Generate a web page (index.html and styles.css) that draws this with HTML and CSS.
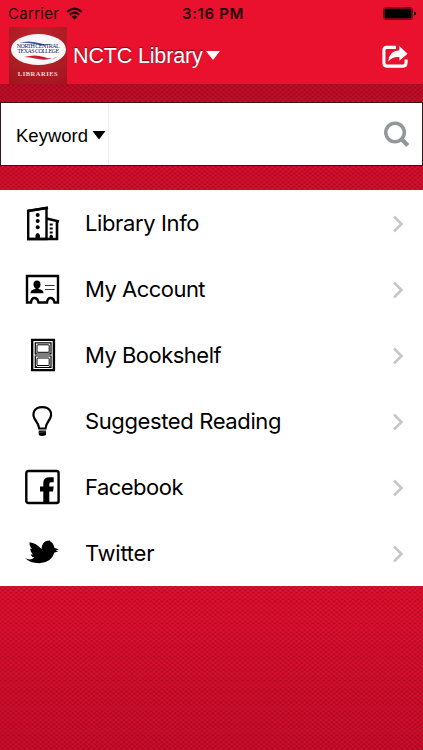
FILE: index.html
```html
<!DOCTYPE html>
<html lang="en">
<head>
<meta charset="utf-8">
<title>NCTC Library</title>
<link rel="stylesheet" href="styles.css">
</head>
<body>
<div class="app">
  <header class="header">
    <div class="status">
      <div class="carrier"><span>Carrier</span>
        <svg width="17" height="13" viewBox="0 0 17 13" fill="none" stroke="currentColor" stroke-width="2.200"><path d="M1.2 4.800Q8.500-1.600 15.800 4.800M3.800 7.800Q8.500 3.600 13.200 7.800"/><path d="M5.600 9.800Q8.500 7.200 11.400 9.800L8.500 12.700Z" fill="currentColor" stroke="none"/></svg>
      </div>
      <span class="time">3:16 PM</span>
      <svg class="battery" width="33" height="13" viewBox="0 0 33 13"><rect x=".5" y=".5" width="29" height="12" rx="2" fill="none" stroke="#66101b"/><rect x="1.500" y="1.500" width="27" height="10" rx="1"/><path d="M31 4.500q2 .5 2 2t-2 2z"/></svg>
    </div>
    <div class="titlebar">
      <div class="logo">
        <div class="seal">
          <svg class="swoosh" width="55" height="32" viewBox="0 0 55 32"><path d="M8 9Q17 6 28 9T46 9Q36 13 26 10.500T8 9Z" fill="#365a9d"/><path d="M13 23Q24 20 33 23T46 23Q36 27 27 25T13 23Z" fill="#c51f31"/></svg>
          <span>NORTH CENTRAL</span><span>TEXAS COLLEGE</span>
        </div>
        <div class="libraries">LIBRARIES</div>
      </div>
      <h1>NCTC Library</h1>
      <svg class="caret" width="14" height="9" viewBox="0 0 14 9"><path d="M0 0H14L7 9Z" fill="#fff"/></svg>
      <svg class="share" width="26" height="24" viewBox="0 0 27 24"><path d="M14.500 2H5Q2 2 2 5V18Q2 21.500 5 21.500H22Q25 21.500 25 18V14.500" fill="none" stroke="#fff" stroke-width="3.200"/><path d="M18 .5L26.500 8.500L18 16V12Q10 11.500 6.500 17Q7 5.500 18 5Z" fill="#fff"/></svg>
    </div>
  </header>
  <div class="search">
    <div class="scope"><span>Keyword</span><svg width="14" height="9" viewBox="0 0 14 9"><path d="M.5 0H13.500L7 8.500Z"/></svg></div>
    <svg class="glass" width="26" height="27" viewBox="0 0 26 27" fill="none" stroke="#92979a"><circle cx="11" cy="11.500" r="9.300" stroke-width="3.500"/><path d="M17 17.500L23.800 24.500" stroke-width="4.300"/></svg>
  </div>
  <nav class="menu">
    <a class="row"><svg class="icon" viewBox="0 0 36 36"><path d="M4.200 34V5.700L22.500 3V34Z" fill="none" stroke="#000" stroke-width="2.400"/><path d="M3 6.200L24 2.800M22.500 13.500L35 16.500M33 17V34H3" fill="none" stroke="#000" stroke-width="2.600"/><circle cx="13.700" cy="10" r="2"/><circle cx="13.700" cy="16" r="2"/><circle cx="13.700" cy="22.200" r="2"/><path d="M11.500 34v-4q2.200-4 4.400 0v4zM25.500 34v-3q1.700-2.500 3.400 0v3z"/><path d="M27.200 18.500V30" stroke="#000" stroke-width="3" stroke-dasharray="2 2"/></svg><span class="l1">Library Info</span><svg class="chevron" viewBox="0 0 12 18"><path d="M2 1.500L9.500 9L2 16.500"/></svg></a>
    <a class="row"><svg class="icon" viewBox="0 0 36 36"><path d="M3 5H34V31.500H30.500Q29.500 27 26.500 27T23 31.500H14.500Q13.500 27 10.500 27T7 31.500H3Z" fill="none" stroke="#000" stroke-width="2.400"/><ellipse cx="13" cy="13.500" rx="3.500" ry="4"/><path d="M11.500 16h3v2q5 .5 5 4.200H6.500Q6.500 18.500 11.500 18z"/><path d="M21 14.500H30.500M21 18.500H30.500" stroke="#333" stroke-width="1.200"/></svg><span class="l2">My Account</span><svg class="chevron" viewBox="0 0 12 18"><path d="M2 1.500L9.500 9L2 16.500"/></svg></a>
    <a class="row"><svg class="icon" viewBox="0 0 36 36" fill="none" stroke="#000"><path d="M8.200 2.900H29.900V33.100H8.200Z" stroke-width="2.400"/><path d="M11.300 5.800H27V17H11.300ZM11.300 19H27V30.500H11.300Z" stroke-width="1.200"/><rect x="13" y="7.800" width="12.200" height="7.500" rx="1"/><rect x="13" y="21" width="12.200" height="7.500" rx="1"/><path d="M11.300 17L13.300 15.500M27 17L24.800 15.500M11.300 30.500L13.300 28.500M27 30.500L24.800 28.500"/></svg><span class="l3">My Bookshelf</span><svg class="chevron" viewBox="0 0 12 18"><path d="M2 1.500L9.500 9L2 16.500"/></svg></a>
    <a class="row"><svg class="icon" viewBox="0 0 36 36"><path d="M15.200 25.500Q15 22 12 18C6.500 10.500 10.500 4.200 18.300 4.200S30 10.500 24.500 18Q21.700 22 21.500 25.500Z" fill="none" stroke="#000" stroke-width="2.200"/><path d="M14.800 27.500H22V32Q18 34 14.800 32Z"/><path d="M14 29.500L22 28.700" stroke="#777" stroke-width=".6"/></svg><span class="l4">Suggested Reading</span><svg class="chevron" viewBox="0 0 12 18"><path d="M2 1.500L9.500 9L2 16.500"/></svg></a>
    <a class="row"><svg class="icon" viewBox="0 0 36 36"><rect x="2.300" y="2" width="32.300" height="32" rx="2" fill="none" stroke="#000" stroke-width="2.400"/><path d="M19.300 34V22.500H16V17.500H19.300V14Q19.300 8.200 25.500 8.200H29.700V13.200H27Q25.300 13.200 25.300 15V17.500H29.700L29 22.500H25.300V34Z"/></svg><span class="l5">Facebook</span><svg class="chevron" viewBox="0 0 12 18"><path d="M2 1.500L9.500 9L2 16.500"/></svg></a>
    <a class="row"><svg class="icon" viewBox="0 0 36 36"><path d="M1 23Q6 26 10.500 22.500Q7.500 22 6.500 19.500H9Q6.500 17 6 13.500L8 14.200Q5 10.500 5.600 7.200Q12 8 17.500 14Q18 6.500 23.500 5.700L26 5.500L26.500 6.800Q29.500 8 30.500 13L34.800 14.300L31.500 15.700L34.500 16.500L30.500 17.500Q27 28 15.500 28.200Q6 28.300 1 23Z"/></svg><span class="l6">Twitter</span><svg class="chevron" viewBox="0 0 12 18"><path d="M2 1.500L9.500 9L2 16.500"/></svg></a>
  </nav>
</div>
</body>
</html>
```

FILE: styles.css
```css
* { box-sizing: border-box; }
body { margin: 0; font-family: Inter, "Liberation Sans", sans-serif; color: #000; }
svg { display: block; flex: none; }
.app {
  height: 750px;
  overflow: hidden;
  background:
    radial-gradient(ellipse 2.2px 1.5px at center, rgba(105,0,22,.5), transparent) 0 0 / 5.4px 4.4px,
    radial-gradient(ellipse 2.2px 1.5px at center, rgba(105,0,22,.5), transparent) 2.7px 2.2px / 5.4px 4.4px,
    linear-gradient(#bc0d27 84px, #c50e29 102px, #d60f2c 166px, #d9102d 190px, #e5112f 586px, #cc0d2b 750px);
}
.header { height: 84px; background: #e9112d; }
.status { height: 27px; padding: 0 7px 0 8px; display: grid; grid-template-columns: 1fr auto 1fr; align-items: center; color: #23050a; font-size: 15px; }
.carrier { display: flex; align-items: center; gap: 7px; letter-spacing: .3px; }
.time { font-weight: 600; letter-spacing: .65px; padding-left: 2px; }
.battery { justify-self: end; }
.titlebar { height: 57px; display: flex; align-items: center; padding: 0 15px 0 9px; }
.logo { width: 58px; height: 57px; flex: none; padding-top: 7px; background: radial-gradient(circle at 50% 30%, #c3272e, #9e151e); }
.seal { width: 55px; height: 31px; margin: 0 auto; border-radius: 50%; background: radial-gradient(#fff 45%, #e1e1e5); display: flex; flex-direction: column; align-items: center; padding-top: 10px; font: 6px/5px "Liberation Serif", serif; color: #16205e; position: relative; white-space: nowrap; letter-spacing: -.55px; }
.seal span { position: relative; }
.swoosh { position: absolute; inset: 0; }
.libraries { margin-top: 5px; text-align: center; font: bold 6.5px/8px "Liberation Serif", serif; letter-spacing: .5px; color: #ead8d7; }
h1 { margin: 0 3px 0 6px; font: 21.5px/26px "Liberation Sans", sans-serif; color: #fff; text-shadow: 0 -1px 1px #5b0714; letter-spacing: -.15px; white-space: nowrap; }
.share { margin-left: auto; margin-top: 3px; }
.search { height: 64px; margin: 18px 0 24px; background: #fff; border: 1px solid #35151b; display: flex; align-items: center; justify-content: space-between; padding-right: 12px; }
.scope { width: 108px; height: 62px; border-right: 1px solid #eee; padding: 3px 0 0 15px; display: flex; align-items: center; gap: 4px; font: 18.5px "Liberation Sans", sans-serif; }
.menu { background: #fff; }
.row { height: 66px; display: flex; align-items: center; padding: 0 19px 0 24px; font-size: 22px; }
.icon { width: 36px; height: 36px; margin-right: 25px; }
.l1, .l4 { letter-spacing: -.38px; }
.l2, .l3, .l5 { letter-spacing: -.52px; }
.l6 { letter-spacing: -.25px; }
.chevron { width: 12px; height: 18px; margin-left: auto; margin-top: 1px; fill: none; stroke: #c5c6ca; stroke-width: 2.5; }
```
